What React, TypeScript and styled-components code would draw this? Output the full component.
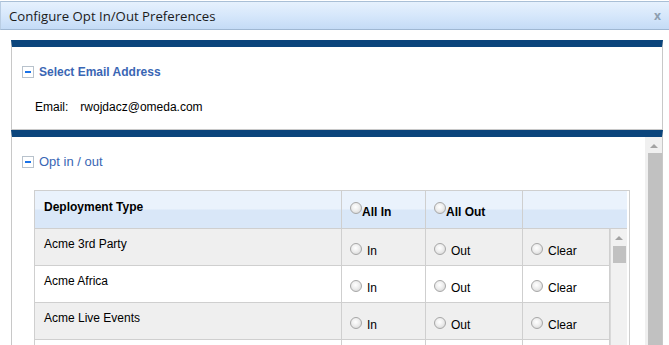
import React from 'react';
import styled, { createGlobalStyle } from 'styled-components';

const GlobalStyle = createGlobalStyle`
  html, body {
    margin: 0;
    padding: 0;
    background: #ffffff;
    overflow: hidden;
  }
  body {
    font-family: "Liberation Sans", Arial, sans-serif;
    font-size: 12px;
    color: #000;
  }
`;

const Dialog = styled.div`
  width: 669px;
  height: 345px;
  display: flex;
  flex-direction: column;
  overflow: hidden;
`;

const TitleBar = styled.div`
  margin-top: 1px;
  height: 27px;
  border-top: 1px solid #a9bfd6;
  border-bottom: 1px solid #9fb7d2;
  border-left: 1px solid #b9cde3;
  background: linear-gradient(to bottom, #e6f1fd 0%, #d6e7fb 50%, #c4dbf6 100%);
  display: flex;
  align-items: center;
  justify-content: space-between;
  padding: 0 8px 0 8px;
`;

const Title = styled.span`
  font-family: "Open Sans", "Noto Sans", sans-serif;
  font-size: 13.2px;
  color: #1b1b1b;
`;

const Close = styled.span`
  font-family: "Open Sans", sans-serif;
  font-size: 12px;
  font-weight: 700;
  color: #8e9fb1;
`;

const Content = styled.div`
  flex: 1;
  padding: 10px 6px 0 11px;
  display: flex;
  flex-direction: column;
  min-height: 0;
`;

const Panel = styled.div<{ $grow?: boolean }>`
  border-top: 7px solid #0b457c;
  border-left: 1px solid #c8c8c8;
  border-right: 1px solid #c8c8c8;
  border-bottom: ${(p) => (p.$grow ? 'none' : '1px solid #c8c8c8')};
  display: flex;
  flex-direction: ${(p) => (p.$grow ? 'row' : 'column')};
  flex: ${(p) => (p.$grow ? '1' : 'none')};
  min-height: 0;
`;

const SectionHead = styled.div<{ $bold?: boolean }>`
  display: flex;
  align-items: center;
  gap: 5px;
  padding-left: 10px;
  color: #3a66b4;
  font-size: ${(p) => (p.$bold ? '12px' : '13px')};
  font-weight: ${(p) => (p.$bold ? 700 : 400)};
`;

const Toggle = styled.span`
  box-sizing: border-box;
  width: 12px;
  height: 12px;
  border: 1px solid #b8c2cc;
  background: #fff;
  display: flex;
  align-items: center;
  justify-content: center;
  &::after {
    content: '';
    width: 6px;
    height: 2px;
    background: #1a73e8;
  }
`;

const EmailBlock = styled.div`
  display: flex;
  flex-direction: column;
  padding: 18px 0 15px;
  gap: 21px;
`;

const EmailRow = styled.div`
  display: flex;
  gap: 12px;
  padding-left: 23px;
  font-size: 12px;
`;

const ScrollArea = styled.div`
  flex: 1;
  display: flex;
  flex-direction: column;
  padding-top: 17px;
  gap: 21px;
  min-width: 0;
`;

const Scrollbar = styled.div<{ $width: number; $thumbTop: number; $thumbW: number }>`
  width: ${(p) => p.$width}px;
  background: #f0f0f0;
  display: flex;
  flex-direction: column;
  align-items: flex-end;
  flex: none;
  overflow: hidden;
  &::before {
    content: '';
    align-self: center;
    margin-top: ${(p) => p.$thumbTop - 6}px;
    border-left: 4px solid transparent;
    border-right: 4px solid transparent;
    border-bottom: 4px solid #a3a3a3;
  }
  &::after {
    content: '';
    margin-top: 5px;
    width: ${(p) => p.$thumbW}px;
    flex: 1;
    background: #c1c1c1;
  }
`;

const TableWrap = styled.div`
  margin-left: 22px;
  width: 594px;
  border: 1px solid #cfcfcf;
  border-bottom: none;
  display: flex;
  flex-direction: column;
`;

const Grid = styled.div`
  display: grid;
  grid-template-columns: 307px 84px 97px 87px 17px;
`;

const HeadCell = styled.div<{ $last?: boolean }>`
  height: 38px;
  box-sizing: border-box;
  background: linear-gradient(to bottom, #eaf2fc 0%, #eaf2fc 48%, #d9e7f8 52%, #d9e7f8 100%);
  border-right: ${(p) => (p.$last ? 'none' : '1px solid #cfcfcf')};
  border-bottom: 1px solid #cfcfcf;
  font-weight: 700;
  font-size: 12px;
  display: flex;
  align-items: flex-start;
  padding: 9px 0 0 9px;
  grid-column: ${(p) => (p.$last ? 'span 2' : 'auto')};
`;

const HeadOption = styled.label`
  display: flex;
  align-items: flex-start;
  padding-top: 5px;
  margin-left: -1px;
`;

const Cell = styled.div<{ $alt: boolean; $name?: boolean }>`
  height: 37px;
  box-sizing: border-box;
  background: ${(p) => (p.$alt ? '#efefef' : '#ffffff')};
  border-right: 1px solid #cfcfcf;
  border-bottom: 1px solid #cfcfcf;
  display: flex;
  align-items: flex-start;
  padding: ${(p) => (p.$name ? '8px 0 0 9px' : '15px 0 0 8px')};
  gap: 5px;
  font-size: 12px;
`;

const Radio = styled.span<{ $up?: number }>`
  box-sizing: border-box;
  width: 12px;
  height: 12px;
  border-radius: 50%;
  border: 1px solid #a7a7a7;
  background: radial-gradient(circle at 45% 40%, #ffffff 0%, #eeeeee 45%, #cfcfcf 100%);
  flex: none;
  margin-top: ${(p) => (p.$up ? -p.$up : -1)}px;
`;

const InnerScroll = styled.div`
  grid-column: 5;
  grid-row: 2 / span 4;
  background: #f1f1f1;
  border-left: 1px solid #d9d9d9;
  display: flex;
  flex-direction: column;
  align-items: center;
  &::before {
    content: '';
    margin-top: 7px;
    border-left: 4px solid transparent;
    border-right: 4px solid transparent;
    border-bottom: 4px solid #a3a3a3;
  }
  &::after {
    content: '';
    margin-top: 6px;
    width: 13px;
    height: 17px;
    background: #c1c1c1;
  }
`;

// the last row is only peeking in at the bottom edge, so it is left blank
const rows = ['Acme 3rd Party', 'Acme Africa', 'Acme Live Events', ''];

const Option = ({ label }: { label: string }) => (
  <>
    <Radio />
    <span>{label}</span>
  </>
);

const App = () => {
  return (
    <Dialog>
      <GlobalStyle />
      <TitleBar>
        <Title>Configure Opt In/Out Preferences</Title>
        <Close>x</Close>
      </TitleBar>
      <Content>
        <Panel>
          <EmailBlock>
            <SectionHead $bold>
              <Toggle />
              Select Email Address
            </SectionHead>
            <EmailRow>
              <span>Email:</span>
              <span>rwojdacz@omeda.com</span>
            </EmailRow>
          </EmailBlock>
        </Panel>
        <Panel $grow>
          <ScrollArea>
            <SectionHead>
              <Toggle />
              Opt in / out
            </SectionHead>
            <TableWrap>
              <Grid>
                <HeadCell>Deployment Type</HeadCell>
                <HeadCell>
                  <HeadOption>
                    <Radio $up={3} />
                    All In
                  </HeadOption>
                </HeadCell>
                <HeadCell>
                  <HeadOption>
                    <Radio $up={3} />
                    All Out
                  </HeadOption>
                </HeadCell>
                <HeadCell $last />
                {rows.map((name, i) => (
                  <React.Fragment key={i}>
                    <Cell $alt={i % 2 === 0} $name>
                      {name}
                    </Cell>
                    <Cell $alt={i % 2 === 0}>{name && <Option label="In" />}</Cell>
                    <Cell $alt={i % 2 === 0}>{name && <Option label="Out" />}</Cell>
                    <Cell $alt={i % 2 === 0}>{name && <Option label="Clear" />}</Cell>
                  </React.Fragment>
                ))}
                <InnerScroll />
              </Grid>
            </TableWrap>
          </ScrollArea>
          <Scrollbar $width={17} $thumbTop={13} $thumbW={14} />
        </Panel>
      </Content>
    </Dialog>
  );
};

export default App;
